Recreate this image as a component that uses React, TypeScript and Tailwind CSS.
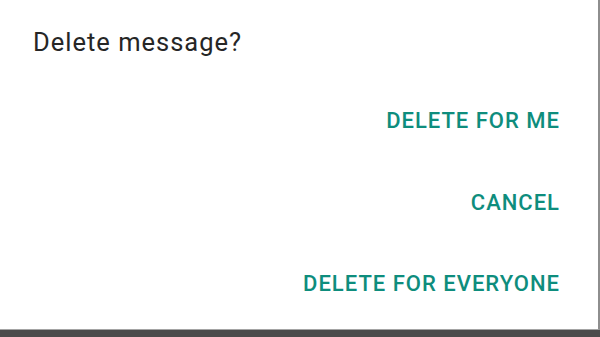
export default function App() {
  return (
    <div className="w-[600px] h-[337px] bg-[#4b4b4b] overflow-hidden" style={{ fontFamily: 'Roboto, "Liberation Sans", sans-serif' }}>
      <div className="w-[600px] h-[330px] bg-white border-r-2 border-r-[#8e8e8e] border-b border-b-[#a4a4a4]">
        <h1 className="pl-[33px] pt-[27px] text-[25.5px] leading-[30px] font-normal tracking-[1px] text-[#262626]">
          Delete message?
        </h1>
        <div className="mt-[40px] pr-[38px] flex flex-col items-end gap-[33.5px]">
          <button className="h-12 flex items-center text-[22px] leading-none font-medium tracking-[1px] text-[#0e8d7d]">
            DELETE FOR ME
          </button>
          <button className="h-12 flex items-center text-[22px] leading-none font-medium tracking-[1px] text-[#0e8d7d]">
            CANCEL
          </button>
          <button className="h-12 flex items-center text-[22px] leading-none font-medium tracking-[1px] text-[#0e8d7d]">
            DELETE FOR EVERYONE
          </button>
        </div>
      </div>
    </div>
  );
}
